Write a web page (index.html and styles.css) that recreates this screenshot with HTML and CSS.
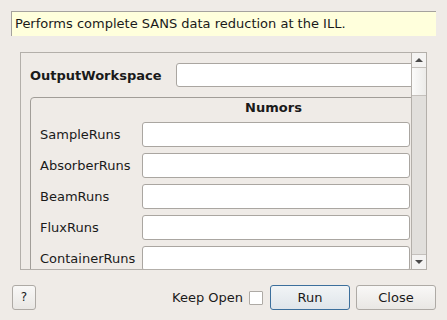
FILE: index.html
```html
<!doctype html>
<html>
	<head>
		<title>SANSILLReduction</title>
		<meta charset="utf-8" />
		<link rel="stylesheet" href="styles.css">
	</head>

	<body>

		<div id="dialog">

			<div class="tip">Performs complete SANS data reduction at the ILL.</div>

			<div class="scroll_area">

				<div class="viewport">
					<div class="content">

						<div class="top_row">
							<div class="label bold">OutputWorkspace</div>
							<div class="field wide"></div>
						</div>

						<div class="group">
							<div class="group_title">Numors</div>

							<div class="row">
								<div class="label">SampleRuns</div>
								<div class="field"></div>
							</div>
							<div class="row">
								<div class="label">AbsorberRuns</div>
								<div class="field"></div>
							</div>
							<div class="row">
								<div class="label">BeamRuns</div>
								<div class="field"></div>
							</div>
							<div class="row">
								<div class="label">FluxRuns</div>
								<div class="field"></div>
							</div>
							<div class="row">
								<div class="label">ContainerRuns</div>
								<div class="field"></div>
							</div>
						</div>

					</div>
				</div>

				<div class="vscroll">
					<div class="arrow up"></div>
					<div class="thumb"></div>
					<div class="track"></div>
					<div class="arrow down"></div>
				</div>

			</div>

			<div class="buttons">
				<div class="button help">?</div>
				<div class="spacer"></div>
				<div class="keep_open">Keep Open</div>
				<div class="checkbox"></div>
				<div class="button default">Run</div>
				<div class="button">Close</div>
			</div>

		</div>

	</body>
</html>
```

FILE: styles.css
```css
body {
	margin: 0;
	background-color: #efebe7;
	font-family: 'DejaVu Sans', sans-serif;
	font-size: 13px;
	color: #1a1a1a;
}

#dialog {
	display: flex;
	flex-direction: column;
	width: 447px;
	height: 320px;
	padding-top: 11px;
	box-sizing: border-box;
}

.tip {
	margin: 0 11px 0 11px;
	height: 25px;
	line-height: 24px;
	padding-left: 3px;
	box-sizing: border-box;
	background-color: #ffffdc;
	border-top: 1px solid #a5a29e;
	border-left: 1px solid #a5a29e;
	white-space: nowrap;
}

/* the scrolled property list */
.scroll_area {
	display: flex;
	margin: 16px 0 0 20px;
	width: 407px;
	height: 218px;
	box-sizing: border-box;
	border: 1px solid #b3afaa;
}

.viewport {
	flex: 1;
	overflow: hidden;
}

.content {
	padding: 10px 0 0 9px;
}

.top_row {
	display: flex;
	align-items: center;
	height: 24px;
}

.top_row .label {
	width: 146px;
	flex-shrink: 0;
}

.bold {
	font-weight: bold;
}

.field {
	height: 25px;
	width: 268px;
	flex-shrink: 0;
	box-sizing: border-box;
	background-color: #ffffff;
	border: 1px solid #aaa6a1;
	border-radius: 3px;
}

.field.wide {
	height: 24px;
	width: 300px;
}

.group {
	margin-top: 10px;
	width: 487px;
	height: 200px;
	box-sizing: border-box;
	border: 1px solid #a19d98;
	border-radius: 4px;
	padding-left: 9px;
}

.group_title {
	font-weight: bold;
	text-align: center;
	line-height: 20px;
	margin-bottom: 4px;
	padding-right: 9px;
}

.row {
	display: flex;
	align-items: center;
	margin-bottom: 6px;
}

.row .label {
	width: 102px;
	flex-shrink: 0;
}

/* vertical scroll bar */
.vscroll {
	display: flex;
	flex-direction: column;
	width: 15px;
	box-sizing: border-box;
	border-left: 1px solid #b3afaa;
	background-color: #e1dfdc;
}

.arrow {
	height: 14px;
	flex-shrink: 0;
	position: relative;
	background-color: #f4f3f2;
}

.arrow.up {
	border-bottom: 1px solid #c4c0bc;
}

.arrow.down {
	border-top: 1px solid #c4c0bc;
}

.arrow::after {
	content: '';
	position: absolute;
	left: 3px;
	top: 5px;
	border-left: 4px solid transparent;
	border-right: 4px solid transparent;
}

.arrow.up::after {
	border-bottom: 4px solid #4a4a4a;
}

.arrow.down::after {
	border-top: 4px solid #4a4a4a;
}

.thumb {
	height: 27px;
	flex-shrink: 0;
	background: linear-gradient(to right, #fbfbfa, #ecebe9);
	border-bottom: 1px solid #c4c0bc;
}

.track {
	flex: 1;
}

/* dialog buttons */
.buttons {
	display: flex;
	align-items: center;
	margin: 15px 11px 0 12px;
	height: 25px;
}

.spacer {
	flex: 1;
}

.button {
	height: 25px;
	width: 80px;
	line-height: 23px;
	box-sizing: border-box;
	text-align: center;
	border: 1px solid #aeaaa5;
	border-radius: 3px;
	background: linear-gradient(#f9f8f7, #e9e7e4);
	margin-left: 6px;
}

.button.help {
	width: 24px;
	margin-left: 0;
	font-size: 12px;
}

.button.default {
	border-color: #3c6f9c;
	background: linear-gradient(#f1f4f6, #dfe5ea);
	margin-left: 7px;
}

.keep_open {
	margin-right: 6px;
}

.checkbox {
	width: 14px;
	height: 14px;
	box-sizing: border-box;
	background-color: #ffffff;
	border: 1px solid #aeaaa5;
	border-radius: 1px;
}
```
